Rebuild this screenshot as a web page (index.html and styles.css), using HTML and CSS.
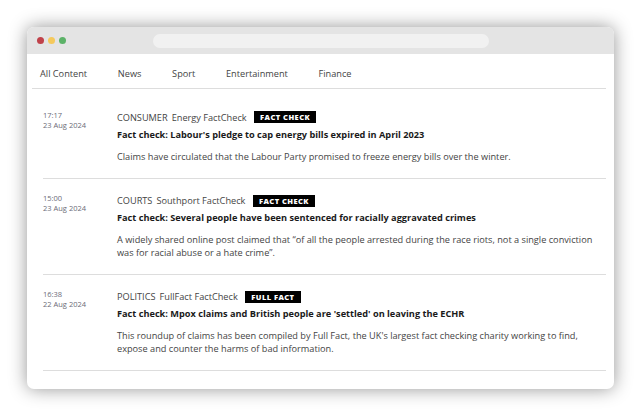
FILE: index.html
```html
<!DOCTYPE html>
<html lang="en">
<head>
<meta charset="utf-8">
<title>Fact check feed</title>
<link rel="stylesheet" href="styles.css">
</head>
<body>
<div class="window">
  <div class="titlebar">
    <div class="dots"><span class="dot red"></span><span class="dot yellow"></span><span class="dot green"></span></div>
    <div class="address"></div>
  </div>
  <nav class="nav">
    <a>All Content</a><a>News</a><a>Sport</a><a>Entertainment</a><a>Finance</a>
  </nav>
  <div class="feed">
    <article class="item">
      <div class="when">17:17<br>23 Aug 2024</div>
      <div class="body">
        <div class="meta"><span class="cat">CONSUMER</span><span>Energy FactCheck</span><span class="badge">FACT CHECK</span></div>
        <h2 class="title">Fact check: Labour's pledge to cap energy bills expired in April 2023</h2>
        <p class="desc">Claims have circulated that the Labour Party promised to freeze energy bills over the winter.</p>
      </div>
    </article>
    <article class="item">
      <div class="when">15:00<br>23 Aug 2024</div>
      <div class="body">
        <div class="meta"><span class="cat">COURTS</span><span>Southport FactCheck</span><span class="badge">FACT CHECK</span></div>
        <h2 class="title">Fact check: Several people have been sentenced for racially aggravated crimes</h2>
        <p class="desc">A widely shared online post claimed that “of all the people arrested during the race riots, not a single conviction was for racial abuse or a hate crime”.</p>
      </div>
    </article>
    <article class="item">
      <div class="when">16:38<br>22 Aug 2024</div>
      <div class="body">
        <div class="meta"><span class="cat">POLITICS</span><span>FullFact FactCheck</span><span class="badge">FULL FACT</span></div>
        <h2 class="title">Fact check: Mpox claims and British people are 'settled' on leaving the ECHR</h2>
        <p class="desc">This roundup of claims has been compiled by Full Fact, the UK's largest fact checking charity working to find, expose and counter the harms of bad information.</p>
      </div>
    </article>
  </div>
</div>
</body>
</html>
```
FILE: styles.css
```css
* { box-sizing: border-box; }
html, body { margin: 0; height: 100%; background: #fff; }
body { padding: 27px 27px 0; font-family: "Open Sans", sans-serif; color: #444; overflow: hidden; }
.window {
  width: 587px; height: 362px; background: #fff; border-radius: 7px; overflow: hidden;
  box-shadow: 0 0 18px rgba(0,0,0,.42);
}
.titlebar { height: 27px; background: #e4e4e4; display: flex; align-items: center; padding: 0 10px; position: relative; }
.dots { display: flex; gap: 4px; }
.dot { width: 7px; height: 7px; border-radius: 50%; }
.red { background: #c0424a; }
.yellow { background: #f5c95c; }
.green { background: #5cb268; }
.address { position: absolute; left: 126px; top: 7px; width: 336px; height: 14px; border-radius: 7px; background: #f1f1f1; }
.nav { margin: 0 8px 0 5px; height: 35px; padding: 4px 0 0 8px; border-bottom: 1px solid #ddd; display: flex; align-items: center; gap: 30.7px; font-size: 9.2px; color: #444; }
.feed { margin: 0 8px 0 16px; }
.item { display: flex; border-bottom: 1px solid #ddd; padding: 21.5px 0 15.5px; }
.item + .item { padding: 15px 0; }
.when { width: 74px; flex: none; margin-top: -0.5px; font-size: 7.5px; line-height: 10px; color: #6b6b78; }
.item + .item .when { margin-top: -1.5px; }
.body { flex: 1; min-width: 0; }
.meta { display: flex; align-items: center; height: 13px; font-size: 9.2px; color: #444; gap: 4px; }
.badge { margin-left: 3.5px; background: #000; color: #fff; font-weight: 800; font-size: 7.5px; letter-spacing: .45px; line-height: 12px; height: 12px; padding: 0 6px; }
.title { margin: 4px 0 0; font-size: 9.2px; line-height: 14px; font-weight: 700; color: #1a1a1a; }
.desc { margin: 8px 0 0; font-size: 9.2px; line-height: 13px; color: #444; }
```
